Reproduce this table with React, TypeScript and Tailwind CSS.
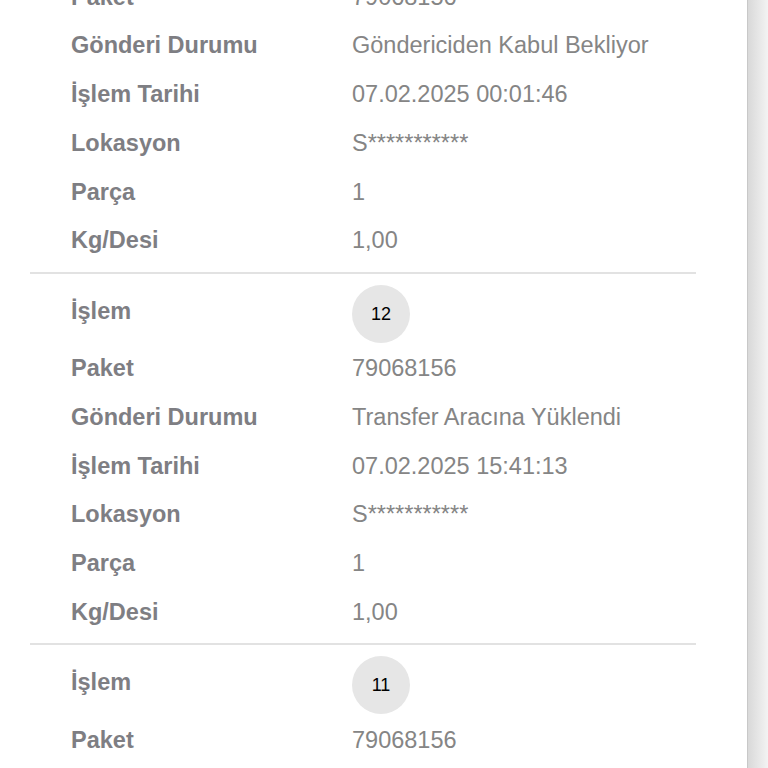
const rows = (status: string, date: string) => [
  { label: 'Paket', value: '79068156' },
  { label: 'Gönderi Durumu', value: status },
  { label: 'İşlem Tarihi', value: date },
  { label: 'Lokasyon', value: 'S***********' },
  { label: 'Parça', value: '1' },
  { label: 'Kg/Desi', value: '1,00' },
];

const steps = [
  { no: 13, status: 'Göndericiden Kabul Bekliyor', date: '07.02.2025 00:01:46' },
  { no: 12, status: 'Transfer Aracına Yüklendi', date: '07.02.2025 15:41:13' },
  { no: 11, status: 'Transfer Aracına Yüklendi', date: '07.02.2025 15:41:13' },
];

function Row({ label, value }: { label: string; value: string }) {
  return (
    <div className="flex h-[48.75px] items-center">
      <div className="w-[322px] pl-[41px] font-bold text-[#7e7e83]">{label}</div>
      <div className="text-[#858585]">{value}</div>
    </div>
  );
}

function Step({ no, status, date }: { no: number; status: string; date: string }) {
  return (
    <section className="border-t-2 border-[#e2e2e2] pt-[11px] pb-[6px]">
      <div className="mb-[2px] flex h-[58px] items-center">
        <div className="w-[322px] pb-1 pl-[41px] font-bold text-[#7e7e83]">İşlem</div>
        <div className="flex h-[58px] w-[58px] items-center justify-center rounded-full bg-[#e6e6e6] text-[18px] text-black">
          {no}
        </div>
      </div>
      {rows(status, date).map((r) => (
        <Row key={r.label} label={r.label} value={r.value} />
      ))}
    </section>
  );
}

export default function App() {
  return (
    <div className="flex h-[768px] w-[768px] overflow-hidden bg-[#efefef] font-['Liberation_Sans',Arial,sans-serif] text-[23.5px] leading-none">
      <div className="w-[747px] shrink-0 bg-white pl-[30px]">
        <div className="-mt-[100px] w-[666px]">
          {steps.map((s) => (
            <Step key={s.no} no={s.no} status={s.status} date={s.date} />
          ))}
        </div>
      </div>
      <div className="flex-1 border-l border-[#c8c8c8] bg-gradient-to-r from-[#d9d9d9] to-[#f3f3f3]" />
    </div>
  );
}
